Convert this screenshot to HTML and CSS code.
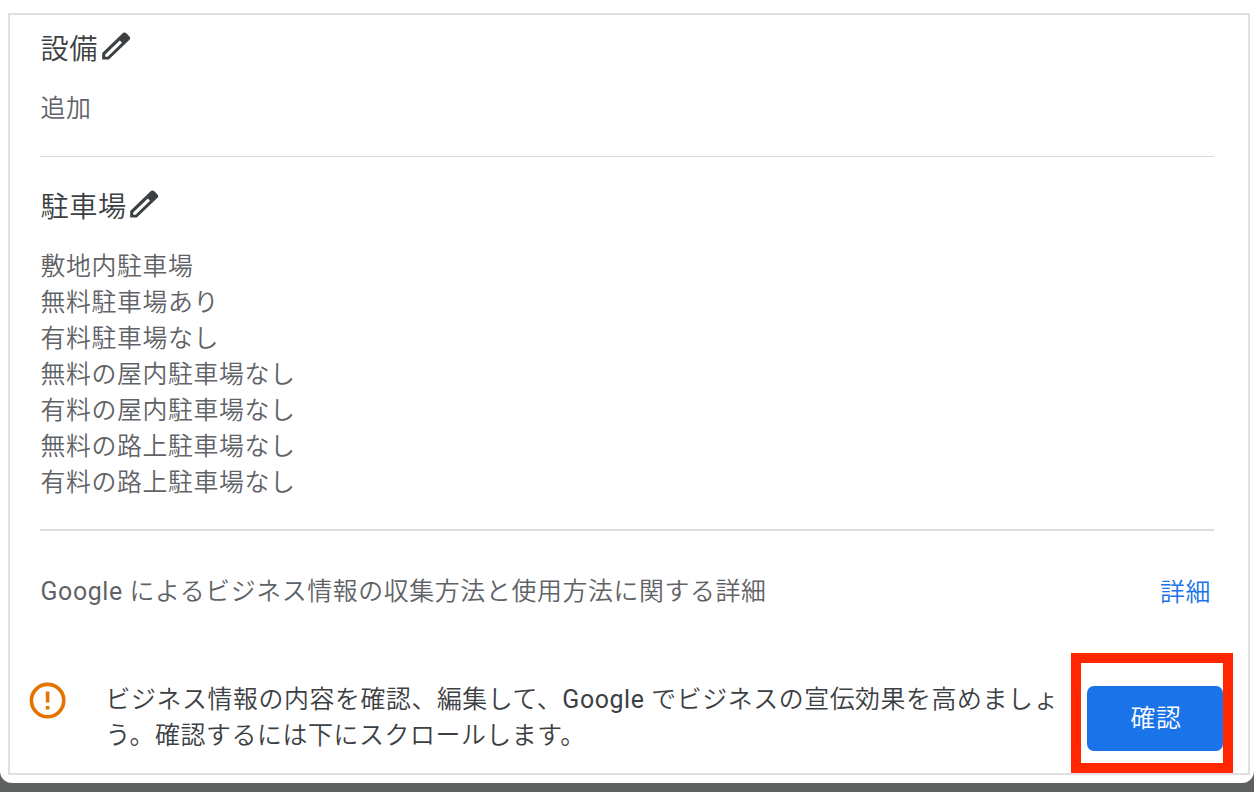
FILE: index.html
```
<!DOCTYPE html>
<html lang="ja">
<head>
    <meta charset="UTF-8">
    <meta name="viewport" content="width=device-width, initial-scale=1.0">
    <title>ビジネス情報</title>
    <link rel="stylesheet" href="styles.css">
</head>
<body>
    <div class="dialog">
        <div class="panel">
            <div class="section amenities">
                <h2>設備<svg class="pencil" viewBox="0 0 30 30"><path fill-rule="evenodd" d="M1.2 22V28.5h6.6L28 9.3c1.6-1.6 1.6-2.7.2-4.1l-2.6-2.6c-1.4-1.4-2.8-1.3-4.2 0zM18.8 9.6l2.2 2.2L6.6 25.8H4.2v-2.2z"/></svg></h2>
                <p>追加</p>
            </div>
            <div class="section parking">
                <h2>駐車場<svg class="pencil" viewBox="0 0 30 30"><path fill-rule="evenodd" d="M1.2 22V28.5h6.6L28 9.3c1.6-1.6 1.6-2.7.2-4.1l-2.6-2.6c-1.4-1.4-2.8-1.3-4.2 0zM18.8 9.6l2.2 2.2L6.6 25.8H4.2v-2.2z"/></svg></h2>
                <ul>
                    <li>敷地内駐車場</li>
                    <li>無料駐車場あり</li>
                    <li>有料駐車場なし</li>
                    <li>無料の屋内駐車場なし</li>
                    <li>有料の屋内駐車場なし</li>
                    <li>無料の路上駐車場なし</li>
                    <li>有料の路上駐車場なし</li>
                </ul>
            </div>
            <div class="info">
                <span><b>Google</b> によるビジネス情報の収集方法と使用方法に関する詳細</span>
                <a href="#">詳細</a>
            </div>
            <div class="footer">
                <svg class="alert" viewBox="0 0 38 38"><circle cx="18.6" cy="18.6" r="16.2" fill="none" stroke="#e37400" stroke-width="3.6"/><path fill="#e37400" d="M16.8 9.6h3.6v11h-3.6zM16.8 24h3.6v3.6h-3.6z"/></svg>
                <p>ビジネス情報の内容を確認、編集して、<b>Google</b> でビジネスの宣伝効果を高めましょ<br>う。確認するには下にスクロールします。</p>
                <div class="highlight">
                    <button>確認</button>
                </div>
            </div>
        </div>
    </div>
</body>
</html>
```
FILE: styles.css
```
* {
    box-sizing: border-box;
}
body {
    margin: 0;
    height: 792px;
    overflow: hidden;
    background-color: #5f6060;
    font-family: Roboto, "Noto Sans CJK JP", sans-serif;
    font-weight: 350;
    color: #3c4043;
}
b {
    font-weight: 400;
}
.dialog {
    height: 783px;
    padding: 13px 4px 0 8px;
    background-color: #fff;
    border-radius: 0 0 12px 12px;
}
.panel {
    height: 762px;
    border: 2px solid #e0e0e0;
    padding: 0 15px 0 18px;
}
.section {
    margin: 0 19px 0 12px;
    border-bottom: 1px solid #dadce0;
}
.amenities {
    height: 142px;
    padding-top: 11px;
}
.parking {
    height: 374px;
    padding-top: 27px;
    border-bottom-width: 2px;
}
h2 {
    display: flex;
    align-items: center;
    margin: 0;
    height: 40px;
    padding-left: 0.5px;
    font-size: 28.2px;
    font-weight: 350;
    letter-spacing: 0.6px;
}
.pencil {
    width: 30px;
    height: 30px;
    margin: 0 0 0 2.5px;
    fill: #3c4043;
}
p, ul {
    margin: 0;
    padding: 0;
    font-size: 24.9px;
    letter-spacing: 0.6px;
    line-height: 36px;
    list-style: none;
}
.section p, .section ul {
    margin-top: 25px;
    padding-left: 0.5px;
    color: #5f6368;
}
.info {
    display: flex;
    justify-content: space-between;
    margin: 0 22px 0 12.5px;
    padding-top: 43px;
    height: 122px;
    font-size: 24.9px;
    letter-spacing: 0.62px;
    line-height: 36px;
    color: #5f6368;
}
.info a {
    margin-top: 1px;
    color: #1a73e8;
    text-decoration: none;
}
.footer {
    display: flex;
}
.alert {
    flex: none;
    width: 38px;
    height: 38px;
    margin: 29px 0 0 1px;
}
.footer p {
    flex: none;
    width: 966px;
    margin: 29px 0 0 38px;
    padding-left: 0.5px;
    white-space: nowrap;
}
.highlight {
    flex: none;
    width: 162px;
    height: 120px;
    padding: 23px 0 0 6px;
    border: 10px solid #ff2600;
}
button {
    width: 136px;
    height: 65px;
    padding: 0 0 5px 2px;
    border: 0;
    border-radius: 7px;
    background-color: #1a73e8;
    color: #fff;
    font-family: inherit;
    font-size: 24.9px;
    font-weight: 350;
    letter-spacing: 0.6px;
}
```
